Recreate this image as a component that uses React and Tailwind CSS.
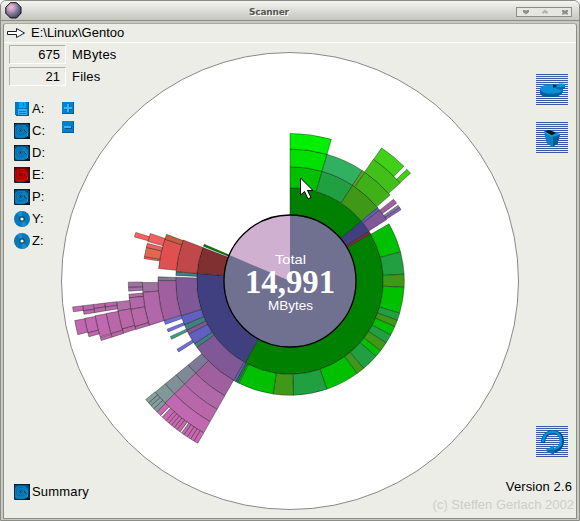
import React from "react";

const CX = 290;
const CY = 281;
const R0 = 66;

// Every ring covers the same area per degree, so radii grow with the square root of the level.
const ring = (level) => R0 * Math.sqrt(level);

function point(angle, r) {
  const a = (angle * Math.PI) / 180;
  return `${(CX + r * Math.sin(a)).toFixed(2)} ${(CY - r * Math.cos(a)).toFixed(2)}`;
}

function arcPath(level, from, to) {
  const a = ring(level);
  const b = ring(level + 1);
  const large = to - from > 180 ? 1 : 0;
  return `M${point(from, a)}L${point(from, b)}A${b} ${b} 0 ${large} 1 ${point(to, b)}L${point(to, a)}A${a} ${a} 0 ${large} 0 ${point(from, a)}Z`;
}

const G = "#00c000";
const T = "#20a040";
const O = "#409818";

// [level, start angle, end angle, fill]
const segments = [
  [1, 0, 50.1, "#008000"],
  [1, 50.1, 58, "#404080"],
  [1, 58, 59.8, "#803030"],
  [1, 59.8, 208.7, "#008000"],
  [1, 208.7, 274.7, "#404080"],
  [1, 274.7, 291, "#803030"],
  [1, 291.8, 293.2, "#008000"],

  [2, 0, 16.3, G],
  [3, 0, 16.3, "#00e000"],
  [4, 0, 16.3, "#00f000"],
  [2, 16.3, 33.2, T],
  [3, 16.3, 33.2, "#30b060"],
  [3, 33.2, 34.6, "#60a020"],
  [2, 33.2, 50.1, O],
  [3, 34.6, 49.4, "#40b018"],
  [4, 34.4, 48.4, "#40c018"],
  [5, 34.5, 44.8, "#40d018"],
  [5, 46.3, 48.2, "#40d018"],
  [2, 50.1, 51.6, "#6060c8"],
  [2, 51.6, 57.6, "#805898"],
  [3, 51.7, 53.9, "#a060a0"],
  [3, 55, 56.2, "#808098"],
  [3, 56.2, 57.3, "#9060c0"],

  [2, 60, 75.3, G],
  [2, 75.3, 86.6, T],
  [2, 86.6, 93.2, O],
  [2, 93.2, 106.3, G],
  [2, 106.3, 110.1, T],
  [2, 110.1, 113.5, O],
  [2, 113.5, 118.2, G],
  [2, 118.2, 122.8, T],
  [2, 122.8, 127.6, O],
  [2, 127.6, 131.3, G],
  [2, 131.3, 139.9, T],
  [2, 139.9, 144.1, O],
  [2, 144.1, 161.2, G],
  [2, 161.2, 178.3, T],
  [2, 178.3, 188.5, O],
  [2, 188.5, 206.6, G],
  [2, 206.6, 207.4, T],
  [2, 207.4, 208.4, "#208050"],
  [2, 208.4, 209.6, "#6060c0"],

  [2, 209.6, 234.5, "#805898"],
  [2, 234.5, 236.7, "#408080"],
  [2, 236.7, 242.3, "#6060c0"],
  [2, 242.3, 244.6, "#805898"],
  [2, 244.6, 247.6, "#408080"],
  [2, 247.6, 252.3, "#6060c0"],
  [2, 252.3, 271.9, "#805898"],
  [2, 272.8, 274.7, "#408080"],
  [2, 274.7, 291, "#c04848"],

  [3, 237.5, 238.9, "#7070e0"],
  [3, 243.8, 245.1, "#40a080"],
  [3, 247.3, 248.6, "#7070e0"],
  [3, 250.8, 252.5, "#7070d8"],

  [3, 209.6, 225.7, "#a060a0"],
  [4, 209.6, 225.7, "#b068a8"],
  [5, 209.6, 225.7, "#b868a8"],
  [6, 209.6, 225.7, "#c068b0"],
  [3, 225.7, 230.5, "#807898"],
  [4, 225.7, 230.5, "#808898"],
  [5, 225.7, 230.5, "#809098"],
  [6, 225.7, 230.5, "#809898"],
  [7, 209.6, 211, "#c868b0"],
  [7, 211, 212.2, "#c868b0"],
  [7, 212.2, 213.4, "#c868b0"],
  [7, 213.4, 214.6, "#c868b0"],
  [7, 214.6, 215.5, "#c868b0"],
  [7, 215.5, 216.1, "#f0f0f0"],
  [7, 216.1, 217.2, "#c868b0"],
  [7, 217.2, 218.3, "#c868b0"],
  [7, 218.3, 219.4, "#c868b0"],
  [7, 219.4, 220.5, "#c868b0"],
  [7, 220.5, 221.6, "#c868b0"],
  [7, 221.6, 223.2, "#c868b0"],
  [7, 223.2, 223.9, "#f0f0f0"],
  [7, 223.9, 225.5, "#c868b0"],
  [7, 225.5, 226.9, "#809898"],
  [7, 226.9, 228.1, "#88a0a0"],
  [7, 228.1, 229.3, "#809898"],
  [7, 229.3, 230.6, "#88a0a0"],

  [3, 252.6, 270.2, "#a060a0"],
  [3, 270.2, 271.8, "#807898"],
  [4, 265.6, 269.4, "#a070a0"],
  [4, 252.5, 265.6, "#b068a8"],
  [5, 266.4, 267.8, "#a070a8"],
  [5, 267.8, 269.6, "#a070a0"],
  [5, 264, 265.3, "#b868a8"],
  [5, 259.9, 264, "#b068a8"],
  [5, 253.6, 259.9, "#b868a8"],
  [5, 252.5, 253.6, "#b868a8"],
  [6, 260.1, 263.1, "#b070a8"],
  [6, 254, 260.1, "#b868a8"],
  [6, 252.6, 254, "#b868a8"],
  [7, 262, 263.2, "#b868a8"],
  [7, 260.8, 262, "#b868a8"],
  [7, 253.6, 260, "#b868a8"],
  [7, 252.5, 253.6, "#b868a8"],
  [8, 262, 263.2, "#b868a8"],
  [8, 260.8, 262, "#b868a8"],
  [8, 253.6, 259.9, "#c068b0"],
  [8, 252.5, 253.4, "#c068b0"],
  [9, 261.8, 263.2, "#b868a8"],
  [9, 260.8, 261.8, "#b868a8"],
  [9, 255.6, 259.7, "#c068b0"],
  [9, 254.5, 255.6, "#c068b0"],
  [10, 261.9, 263.2, "#c068b0"],
  [10, 255.8, 259.6, "#c068b0"],

  [3, 275.4, 288.5, "#e05050"],
  [3, 288.5, 290.7, "#c06040"],
  [4, 278.7, 279.5, "#f06060"],
  [4, 279.5, 283.2, "#e06850"],
  [4, 283.2, 284.8, "#f06060"],
  [4, 285.5, 288.8, "#f06060"],
  [5, 285.8, 287.5, "#ff6060"],
];

function Sunburst() {
  return (
    <svg viewBox="60 51 460 460" className="mt-[8px] h-[460px] w-[460px] shrink-0">
      <circle cx={CX} cy={CY} r="228.5" fill="#fff" stroke="#888" strokeWidth="1" />
      {segments.map(([level, from, to, fill], i) => (
        <path key={i} d={arcPath(level, from, to)} fill={fill} stroke="#000" strokeOpacity="0.42" strokeWidth="0.8" />
      ))}
      <circle cx={CX} cy={CY} r={R0} fill="#707090" />
      <path d={`M${CX} ${CY}L${point(293.2, R0)}A${R0} ${R0} 0 0 1 ${point(360, R0)}Z`} fill="#d0b0d0" />
      <circle cx={CX} cy={CY} r={R0} fill="none" stroke="#000" strokeWidth="1.3" />
      <g fill="#fff" textAnchor="middle">
        <text x="290.5" y="264" fontSize="13.5" textLength="31" lengthAdjust="spacingAndGlyphs" fontFamily="Liberation Sans, sans-serif">Total</text>
        <text x="290" y="293" fontSize="33" fontWeight="700" textLength="90" lengthAdjust="spacingAndGlyphs" fontFamily="Liberation Serif, serif">14,991</text>
        <text x="290.5" y="310" fontSize="13.5" textLength="45" lengthAdjust="spacingAndGlyphs" fontFamily="Liberation Sans, sans-serif">MBytes</text>
      </g>
      <path d="M300.5 178v17l4-3.500 3.500 7.500 3-1.500-3.500-7h5.500z" fill="#fff" stroke="#000" strokeWidth="1" />
    </svg>
  );
}

function HardDisk({ active }) {
  const base = active ? "#c80000" : "#0880c0";
  const dark = active ? "#780000" : "#085080";
  const mid = active ? "#980000" : "#0868a0";
  return (
    <svg viewBox="0 0 16 16" className="h-4 w-4 shrink-0">
      <rect width="16" height="16" rx="1" fill="#082838" />
      <rect x="1" y="1" width="14" height="14" fill={dark} />
      <path d="M1 4l3-2h7l3 3v8l-2 2H3l-2-2z" fill={base} />
      <circle cx="6.500" cy="7.500" r="4.800" fill={mid} />
      <circle cx="6.500" cy="7.500" r="3.800" fill={base} />
      <circle cx="6.500" cy="7.500" r="1.700" fill={base} stroke={dark} strokeWidth=".8" />
      <rect x="6" y="7" width="1" height="1" fill="#102838" />
      <path d="M10 6l4 5v3" fill="none" stroke="#101820" strokeWidth="1.200" />
      <path d="M9.500 4.500l4 5.500v3" fill="none" stroke={active ? "#e81818" : "#20a0e0"} strokeWidth=".9" />
      <path d="M0 0h3L0 2zM16 0v3l-3-3zM9 16l3-2h4v2z" fill="#081820" />
    </svg>
  );
}

function Floppy() {
  return (
    <svg viewBox="0 0 16 16" className="h-4 w-4 shrink-0" shapeRendering="crispEdges">
      <path d="M1 1h14v14H2l-1-1z" fill="#0078c0" />
      <rect x="5" y="1" width="7" height="6" fill="#00a8f8" />
      <rect x="9" y="2" width="1" height="3" fill="#0068a8" />
      <rect x="4" y="8" width="9" height="6" fill="#30b0f0" />
      <path d="M5 10.500h7M5 12.500h7" stroke="#0080c8" />
      <path d="M14.500 1v13.500H2" fill="none" stroke="#0060a0" />
    </svg>
  );
}

function Disc() {
  return (
    <svg viewBox="0 0 16 16" className="h-4 w-4 shrink-0">
      <circle cx="8" cy="8" r="8" fill="#0878b8" />
      <path d="M8 8L3 2a8 8 0 0 1 5-2zM8 8l5 6a8 8 0 0 1-5 2z" fill="#2098d8" opacity=".7" />
      <circle cx="8" cy="8" r="2.800" fill="#084870" />
      <circle cx="8" cy="8" r="1.600" fill="#fff" />
    </svg>
  );
}

function ZoomButton({ plus }) {
  return (
    <svg viewBox="0 0 12 12" className="h-3 w-3" shapeRendering="crispEdges">
      <rect width="12" height="12" fill="#0880c8" />
      <path d="M0 11.500h11.500V0" fill="none" stroke="#0060a0" />
      <path d={plus ? "M5 3h3v2h2v3H8v2H5V8H3V5h2z" : "M3 5h7v3H3z"} fill="#005890" />
      <path d={plus ? "M5 2h2v3h3v2H7v3H5V7H2V5h3z" : "M2 5h7v2H2z"} fill="#30b8ff" />
    </svg>
  );
}

function Stripes({ children, className = "" }) {
  return (
    <svg viewBox="0 0 32 31" className={`h-[31px] w-8 shrink-0 ${className}`}>
      {Array.from({ length: 16 }, (_, i) => (
        <rect key={i} y={i * 2} width="32" height="1" fill="#4058a0" shapeRendering="crispEdges" />
      ))}
      {children}
    </svg>
  );
}

const drives = [
  ["A:", "floppy"],
  ["C:", "disk"],
  ["D:", "disk"],
  ["E:", "active"],
  ["P:", "disk"],
  ["Y:", "disc"],
  ["Z:", "disc"],
];

function DriveIcon({ kind }) {
  if (kind === "floppy") return <Floppy />;
  if (kind === "disc") return <Disc />;
  return <HardDisk active={kind === "active"} />;
}

function Field({ value, label }) {
  return (
    <div className="flex h-[19px] items-center">
      <div className="h-[19px] w-[57px] shrink-0 border border-t-[#b0b1ab] border-r-white border-b-white border-l-[#b0b1ab] pr-[5px] text-right leading-[17px]">
        {value}
      </div>
      <span className="ml-[6px] tracking-[0.2px]">{label}</span>
    </div>
  );
}

export default function App() {
  return (
    <div className="flex h-[521px] w-[580px] flex-col overflow-hidden rounded-t-[6px] border border-[#8c8e86] bg-[#c8cac2] font-['Liberation_Sans',Arial,sans-serif] text-[13px] leading-4 text-black">
      <header className="flex h-[20px] shrink-0 items-center border-b border-[#8c8e86] bg-linear-to-b from-[#f4f4f2] to-[#c4c6be] pr-[7px] pl-[4px]">
        <svg viewBox="0 0 17 17" className="h-[17px] w-[17px]">
          <defs>
            <radialGradient id="ball" cx="35%" cy="30%" r="75%">
              <stop offset="0" stopColor="#f0c0e8" />
              <stop offset=".35" stopColor="#c098b8" />
              <stop offset=".6" stopColor="#787898" />
              <stop offset="1" stopColor="#404058" />
            </radialGradient>
          </defs>
          <path d="M5.500.7h6L16 5.200v6L11.500 16h-6L.8 11.300v-6z" fill="url(#ball)" stroke="#101018" strokeWidth="1" />
        </svg>
        <h1 className="mt-[2px] ml-[227px] grow font-['DejaVu_Sans',sans-serif] text-[9px] font-bold tracking-[-0.2px] text-[#55574e] [text-shadow:1px_1px_0_#fff]">
          Scanner
        </h1>
        <svg viewBox="0 0 56 10" className="mt-[2px] h-[10px] w-[56px]">
          <rect x=".5" y=".5" width="55" height="9" fill="#e6e7e2" stroke="#8c8e86" />
          <path d="M7 3h2l1 1 1-1h2v2l-3 2.500L7 5z" fill="#8c8e86" />
          <path d="M26 6.500v-1.500l3-2.500 3 2.500v1.500h-2l-1-1-1 1z" fill="#b4b6ae" />
          <path d="M46 3h2l1 1 1-1h2v1.500l-1 1 1 1v1h-2l-1-1-1 1h-2v-1l1-1-1-1z" fill="#8c8e86" />
        </svg>
      </header>
      <main className="mx-[2px] mt-[2px] mb-px flex min-h-0 grow flex-col rounded-t-[3px] border border-t-[#a8aaa2] border-r-[#8c8e86] border-b-[#8c8e86] border-l-[#8c8e86] bg-[#ecede7]">
        <div className="flex h-[19px] shrink-0 items-center border-b border-white pl-[3px]">
          <svg viewBox="0 0 18 12" className="h-3 w-[18px]">
            <path d="M.5 4.500h9v-3l8 4.500-8 4.500v-3h-9z" fill="#fff" stroke="#182028" />
          </svg>
          <span className="ml-[6px] tracking-[0px]">E:\Linux\Gentoo</span>
        </div>
        <div className="flex min-h-0 grow">
          <aside className="relative z-10 flex w-[56px] shrink-0 flex-col pt-[2px] pl-[5px] whitespace-nowrap">
            <div className="flex flex-col gap-[3px]">
              <Field value="675" label="MBytes" />
              <Field value="21" label="Files" />
            </div>
            <div className="mt-[15px] ml-[5px] flex w-[70px] gap-[17px]">
              <ul className="flex w-[31px] shrink-0 flex-col gap-[6px]">
                {drives.map(([name, kind]) => (
                  <li key={name} className="flex h-4 items-center gap-[2px]">
                    <DriveIcon kind={kind} />
                    <span>{name}</span>
                  </li>
                ))}
              </ul>
              <div className="mt-px flex flex-col gap-[7px]">
                <ZoomButton plus />
                <ZoomButton />
              </div>
            </div>
            <div className="mt-auto mb-[18px] ml-[5px] flex items-center gap-[2px]">
              <HardDisk />
              <span className="tracking-[0.2px]">Summary</span>
            </div>
          </aside>
          <Sunburst />
          <aside className="flex w-[56px] shrink-0 flex-col items-end pt-[31px] whitespace-nowrap">
            <Stripes className="mr-[8px]">
              <path d="M4 15v4c1 4 6 4 11 4 7 0 11-2 12-6v-3z" fill="#006098" />
              <ellipse cx="15.500" cy="15" rx="11.500" ry="4.800" fill="#0890d8" />
              <path d="M17 13.500v-3l3 .5 1 1.500-2 1z" fill="#002838" />
              <path d="M20 14.500v-1.500l9-3v4l-4 2z" fill="#0068a8" />
              <path d="M20 13.500l3-4h3l3 .5v2.500z" fill="#0890d8" />
            </Stripes>
            <Stripes className="mt-[17px] mr-[8px]">
              <path d="M8 9.500L12 8l12 4-2.500 10-5.500 2.700-5.500-3.700z" fill="#0880c0" />
              <path d="M9 9.500l3.500-1.500 7.500 2.500-4 3z" fill="#001820" />
              <path d="M17 15l7-2.500-2.500 9.500-4.500 2.500z" fill="#005c90" />
              <path d="M8.500 10l7 4 8-2" fill="none" stroke="#18a0e0" strokeWidth="1.200" />
            </Stripes>
            <Stripes className="mt-auto mr-[8px]">
              <path d="M7 17C7 3 26 2 26 15.500c0 5-3 8-8 9.500" fill="none" stroke="#004c80" strokeWidth="4" />
              <path d="M7 16C7 3 25 2 25 15c0 5-3 7.500-8 8.500" fill="none" stroke="#0890d8" strokeWidth="2.400" />
              <path d="M9 24.500l9-5v9.500z" fill="#0870b0" />
              <path d="M9 24.500l9-5-1 4z" fill="#0890d8" />
            </Stripes>
            <p className="mt-[22px] mr-[4px] tracking-[0.1px]">Version 2.6</p>
            <p className="mt-[2px] mr-[2px] mb-[5px] text-[#cdcec9]">(c) Steffen Gerlach 2002</p>
          </aside>
        </div>
      </main>
    </div>
  );
}
